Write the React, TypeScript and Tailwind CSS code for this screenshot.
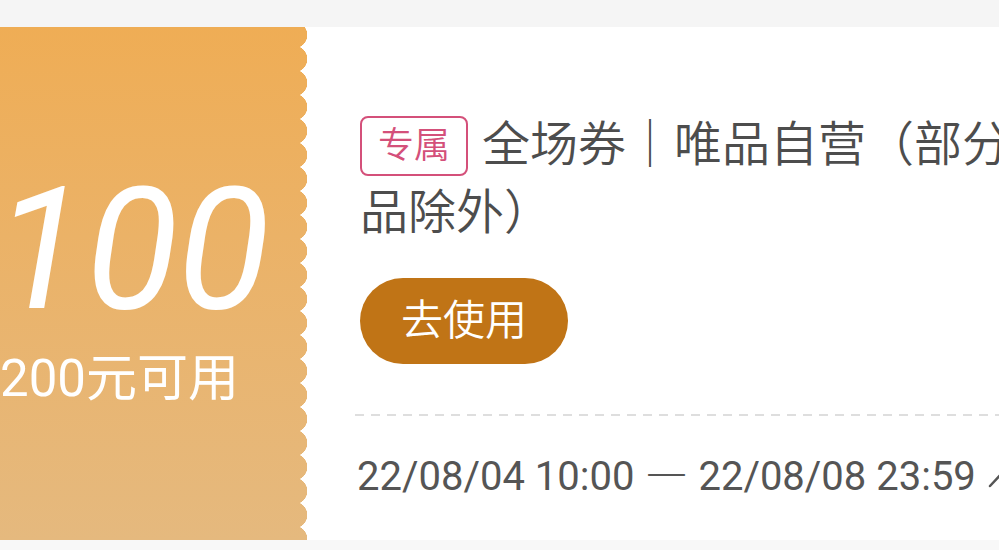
import React from "react";

export default function App() {
  const cjk = { fontFamily: '"Roboto", "Noto Sans CJK SC", sans-serif' };
  return (
    <div className="w-[999px] h-[550px] overflow-hidden bg-[#f5f5f5] pt-[27px]" style={cjk}>
      <div className="flex w-[1400px] h-[513px] bg-white">
        {/* left amount panel */}
        <div className="flex shrink-0">
          <div className="w-[300px] h-full overflow-hidden bg-gradient-to-b from-[#efad55] to-[#e5b97e] flex flex-col pt-[138px]">
            <div className="whitespace-nowrap text-white italic font-normal text-[170px] leading-[170px] tracking-[-1px] -ml-[6px]">
              100
            </div>
            <div className="whitespace-nowrap text-white text-[51px] leading-[58px] font-normal -ml-[51px] mt-[15px]">
              满200元可用
            </div>
          </div>
          <div className="w-[8px] h-full bg-gradient-to-b from-[#efad55] to-[#e5b97e] [mask-image:radial-gradient(circle_at_-6px_50%,#000_13px,transparent_13.5px)] [mask-size:8px_24px] [mask-repeat:repeat-y] [mask-position:0_-4px]" />
        </div>

        {/* right info panel */}
        <div className="flex flex-col pl-[52px] pt-[84px] w-[900px]">
          <div className="w-[740px] text-[48px] leading-[68px] font-[350] text-[#4d4d4d]">
            <span className="inline-flex items-center h-[60px] px-[16px] mr-[14px] border-2 border-[#d4507a] rounded-[8px] text-[36px] leading-none font-[350] text-[#d4507a] align-[3px]">
              专属
            </span>
            全场券｜唯品自营（部分商品除外）
          </div>
          <button className="mt-[31px] w-[208px] h-[86px] rounded-full bg-[#c07416] text-white text-[42px] leading-none font-[350] flex items-center justify-center">
            去使用
          </button>
          <div className="mt-[50px] -ml-[5px] w-[700px] h-[2px] bg-[linear-gradient(to_right,#dedede_9px,transparent_9px)] bg-[length:16px_2px]" />
          <div className="mt-[36px] -ml-[3px] flex items-center whitespace-nowrap text-[40px] leading-[50px] text-[#555555]" style={{ fontFamily: '"Roboto", sans-serif' }}>
            <span>22/08/04 10:00</span>
            <span className="mx-[12px] font-light -translate-y-[6px]" style={{ fontFamily: '"Noto Sans", sans-serif' }}>—</span>
            <span>22/08/08 23:59</span>
            <svg width="34" height="24" viewBox="0 0 34 24" className="ml-[12px] mt-[2px]" fill="none">
              <path d="M2 20 L17 4 L32 20" stroke="#555555" strokeWidth="2.5" strokeLinecap="round" strokeLinejoin="round" />
            </svg>
          </div>
        </div>
      </div>
      <div className="h-[10px] bg-[#f8f8f8]" />
    </div>
  );
}
